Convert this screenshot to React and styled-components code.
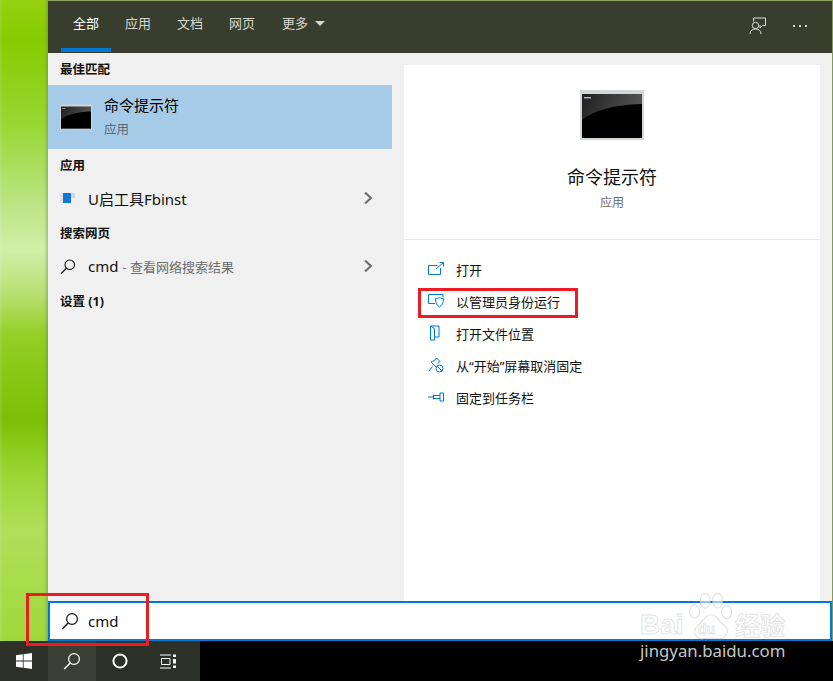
import React from 'react';
import styled, { createGlobalStyle } from 'styled-components';

const Global = createGlobalStyle`
  html, body { margin: 0; padding: 0; background: #000; }
  * { box-sizing: border-box; }
  body { font-family: "Noto Sans", "Noto Sans CJK SC", sans-serif; }
`;

const Page = styled.div`
  position: relative;
  width: 833px;
  height: 681px;
  overflow: hidden;
  display: flex;
  flex-direction: column;
`;
const Desktop = styled.div`
  display: flex;
  height: 641px;
`;
const Wallpaper = styled.div`
  width: 48px;
  background:
    linear-gradient(90deg, rgba(255,255,255,.12) 0, rgba(255,255,255,0) 3px, rgba(255,255,255,0) 44px, rgba(90,110,70,.35) 48px),
    linear-gradient(180deg, #95d010 0, #86cc00 40px, #98d630 120px, #b8e480 200px, #d0f0a8 250px, #b5e070 295px, #94cf25 335px, #7cbf05 420px, #9ad430 470px, #aee05a 530px, #a0d83c 640px);
`;
const Win = styled.div`
  flex: 1;
  display: flex;
  flex-direction: column;
  background: #f0f0f0;
  border-right: 1px solid #7f9c55;
`;
const Header = styled.div`
  height: 53px;
  flex: none;
  display: flex;
  align-items: stretch;
  justify-content: space-between;
  background: #393d2d;
  border-top: 1px solid #8ba35c;
  padding: 0 24px 0 12px;
`;
const Tabs = styled.div`
  display: flex;
`;
const Tab = styled.div`
  width: 50px;
  height: 51px;
  margin: 0 1px;
  display: flex;
  align-items: center;
  justify-content: center;
  gap: 7px;
  padding-bottom: 4px;
  font-size: 13px;
  color: ${p => (p.$active ? '#ffffff' : '#d6d6d0')};
  border-bottom: 4px solid ${p => (p.$active ? '#0078d7' : 'transparent')};
  white-space: nowrap;
  ${p => p.$more && 'width: 66px; justify-content: flex-start; padding-left: 13px;'}
`;
const Caret = styled.span`
  width: 0;
  height: 0;
  border-left: 5px solid transparent;
  border-right: 5px solid transparent;
  border-top: 5px solid #d6d6d0;
  margin-top: 2px;
`;
const HeaderActions = styled.div`
  display: flex;
  align-items: center;
  gap: 25px;
  padding-bottom: 2px;
`;
const Body = styled.div`
  flex: 1;
  display: flex;
  min-height: 0;
`;
const Left = styled.div`
  width: 344px;
  flex: none;
  display: flex;
  flex-direction: column;
`;
const Heading = styled.div`
  height: ${p => p.$h || 34}px;
  flex: none;
  display: flex;
  align-items: center;
  padding: 0 0 ${p => p.$pb ?? 4}px 12px;
  font-size: 12.5px;
  font-weight: 700;
  color: #111;
`;
const BestRow = styled.div`
  height: 64px;
  flex: none;
  display: flex;
  align-items: center;
  gap: 12px;
  padding-left: 12px;
  background: #a6cbe8;
`;
const BestText = styled.div`
  display: flex;
  flex-direction: column;
  gap: 7px;
  padding-bottom: 2px;
`;
const BestTitle = styled.div`
  font-size: 15px;
  line-height: 20px;
  color: #000;
`;
const BestSub = styled.div`
  font-size: 12.5px;
  line-height: 16px;
  color: #56687a;
`;
const Row = styled.div`
  height: 34px;
  flex: none;
  display: flex;
  align-items: center;
  padding: 0 19px 4px 12px;
`;
const IconSlot = styled.span`
  width: 16px;
  height: 16px;
  flex: none;
  display: flex;
  align-items: center;
  justify-content: center;
`;
const RowText = styled.div`
  flex: 1;
  margin-left: 12px;
  font-size: 15px;
  color: #111;
  white-space: nowrap;
`;
const RowHint = styled.span`
  font-size: 13px;
  color: #6d6d6d;
`;
const Right = styled.div`
  flex: 1;
  padding: 12px 12px 0;
  display: flex;
`;
const Card = styled.div`
  flex: 1;
  background: #fff;
  display: flex;
  flex-direction: column;
`;
const Hero = styled.div`
  height: 175px;
  flex: none;
  padding-top: 25px;
  display: flex;
  flex-direction: column;
  align-items: center;
  border-bottom: 1px solid #e9e9e9;
`;
const HeroTitle = styled.div`
  margin-top: 24px;
  font-size: 18px;
  line-height: 26px;
  color: #111;
`;
const HeroSub = styled.div`
  margin-top: 5px;
  font-size: 12px;
  line-height: 16px;
  color: #6d6d6d;
`;
const Actions = styled.div`
  padding-top: 13px;
  display: flex;
  flex-direction: column;
`;
const Action = styled.div`
  height: 32px;
  display: flex;
  align-items: center;
  gap: 12px;
  padding-left: 24px;
  font-size: 13px;
  color: #111;
  white-space: nowrap;
`;
const SearchBox = styled.div`
  height: 40px;
  flex: none;
  display: flex;
  align-items: center;
  gap: 9px;
  padding-left: 11px;
  background: #fff;
  border: 2px solid #0078d7;
  font-size: 15px;
  color: #111;
`;
const Taskbar = styled.div`
  height: 40px;
  flex: none;
  display: flex;
  background: #000;
`;
const TaskGroup = styled.div`
  width: 200px;
  display: flex;
  background: #2c3026;
`;
const TaskCell = styled.div`
  width: 48px;
  display: flex;
  align-items: center;
  justify-content: center;
  background: ${p => (p.$active ? '#3b4034' : 'transparent')};
`;
const RedBox = styled.div`
  position: absolute;
  left: ${p => p.$x}px;
  top: ${p => p.$y}px;
  width: ${p => p.$w}px;
  height: ${p => p.$h}px;
  border: 3px solid #ed1c24;
  pointer-events: none;
`;
const Watermark = styled.div`
  position: absolute;
  left: 638px;
  top: 590px;
  width: 190px;
  height: 85px;
`;
const MarkLogoText = styled.span`
  position: absolute;
  left: ${p => p.$x}px;
  top: ${p => p.$y}px;
  font-family: "Liberation Sans", "Noto Sans CJK SC", sans-serif;
  font-size: ${p => p.$s}px;
  line-height: 1;
  font-weight: 700;
  color: rgba(255,255,255,.6);
  -webkit-text-stroke: 1px rgba(205,205,205,.55);
`;
const MarkUrl = styled.span`
  position: absolute;
  left: 2px;
  top: 51px;
  font-size: 16.8px;
  line-height: 20px;
  color: #c8c8c8;
`;
const PawSvg = styled.svg`
  position: absolute;
  left: 50px;
  top: 2px;
`;

const SearchIcon = ({ color = '#111', size = 18 }) => (
  <svg width={size} height={size} viewBox="0 0 18 18" fill="none" stroke={color} strokeWidth="1.2">
    <circle cx="11" cy="7" r="5.4" />
    <path d="M7.2 11 L1.2 17" strokeWidth="1.4" />
  </svg>
);

const Cmd = ({ w, h }) => {
  const id = `cg${w}`;
  return (
    <svg width={w} height={h} viewBox="0 0 64 50">
      <defs>
        <linearGradient id={id} x1="0" y1="0" x2="1" y2="0.3">
          <stop offset="0" stopColor="#202020" />
          <stop offset="1" stopColor="#555555" />
        </linearGradient>
      </defs>
      <rect x="0" y="0" width="64" height="50" fill="#d0d6dc" />
      <rect x="2" y="4" width="60" height="44" fill={`url(#${id})`} />
      <path d="M2 30 C14 20 34 15 62 14 L62 48 L2 48 Z" fill="#000" />
      <rect x="4" y="7" width="7" height="1.4" fill="#bbb" />
    </svg>
  );
};

const UIcon = () => (
  <svg width="16" height="14" viewBox="0 0 16 14">
    <rect x="0" y="2" width="3" height="10" fill="#dfe3e8" />
    <rect x="3" y="2" width="8" height="10" fill="#0f78d8" />
    <rect x="11" y="2" width="4" height="5" fill="#d5d5d5" />
  </svg>
);

const Chevron = () => (
  <svg width="10" height="14" viewBox="0 0 10 14" fill="none" stroke="#6b6b6b" strokeWidth="2">
    <path d="M2 1.5 L8 7 L2 12.5" />
  </svg>
);

const IconOpen = () => (
  <svg width="16" height="14" viewBox="0 0 16 14" fill="none" stroke="#0078d7" strokeWidth="1">
    <path d="M9.5 3.5 H0.5 V12.5 H12.5 V6" />
    <path d="M8 7 L15 1 M11.5 0.5 H15.5 V4.5" />
  </svg>
);
const IconAdmin = () => (
  <svg width="16" height="14" viewBox="0 0 16 14" fill="none" stroke="#0078d7" strokeWidth="1">
    <path d="M7 9.5 H0.5 V0.5 H15 V3" />
    <path d="M7.5 4.5 C9.5 4.5 10.5 4 11.5 3.5 C12.5 4 13.5 4.5 15.5 4.5 C15.5 9 14 11.5 11.5 13 C9 11.5 7.5 9 7.5 4.5 Z" fill="#fff" />
  </svg>
);
const IconFolder = () => (
  <svg width="16" height="16" viewBox="0 0 16 16" fill="none" stroke="#0078d7" strokeWidth="1">
    <path d="M2.5 1 H11 V12 H6.5 V15 H2.5 Z" />
    <path d="M2.5 1 L6.5 3.5 V12" />
  </svg>
);
const IconUnpin = () => (
  <svg width="16" height="16" viewBox="0 0 16 16" fill="none" stroke="#0078d7" strokeWidth="1">
    <path d="M8.5 1 L12 4.5 L9.5 6.5 M6.5 3.5 L8.5 1 M6.5 3.5 L3 5 L5 7 M3 5 L9 11" />
    <path d="M4.5 9.5 L1 14" />
    <circle cx="11.5" cy="11.5" r="3.5" fill="#fff" />
    <path d="M9 9 L14 14" />
  </svg>
);
const IconPin = () => (
  <svg width="16" height="10" viewBox="0 0 16 10" fill="none" stroke="#0078d7" strokeWidth="1">
    <path d="M0 5 H5.5 M5.5 2.5 V7.5 M5.5 3.5 H12 M5.5 6.5 H12 M12 1 V9 L15.5 9 V1 Z" />
  </svg>
);

const FeedbackIcon = () => (
  <svg width="18" height="18" viewBox="0 0 18 18" fill="none" stroke="#e0e0da" strokeWidth="1">
    <path d="M4.5 4.5 V1 H16.5 V8.5 H13.5 L11 11 V8" />
    <circle cx="6.5" cy="8.5" r="3.2" />
    <path d="M1 17 C1 13.5 3.5 12 6.5 12 C9.5 12 12 13.5 12 17" />
  </svg>
);
const MoreIcon = () => (
  <svg width="16" height="4" viewBox="0 0 16 4" fill="#d8d8d2">
    <rect x="1" y="1" width="2" height="2" />
    <rect x="7" y="1" width="2" height="2" />
    <rect x="13" y="1" width="2" height="2" />
  </svg>
);
const WinLogo = () => (
  <svg width="16" height="16" viewBox="0 0 16 16" fill="#fff">
    <path d="M0 2.3 L6.8 1.3 V7.5 H0 Z M7.6 1.2 L16 0 V7.5 H7.6 Z M0 8.4 H6.8 V14.7 L0 13.7 Z M7.6 8.4 H16 V16 L7.6 14.8 Z" />
  </svg>
);
const Cortana = () => (
  <svg width="16" height="16" viewBox="0 0 16 16" fill="none" stroke="#fff" strokeWidth="2">
    <circle cx="8" cy="8" r="6.6" />
  </svg>
);
const TaskView = () => (
  <svg width="17" height="15" viewBox="0 0 17 15" fill="none" stroke="#fff" strokeWidth="1">
    <path d="M0 1 H11 M0 14 H11 M1.5 4.5 H10 V10.5 H1.5 Z" />
    <rect x="13" y="0.5" width="3" height="2.5" fill="#fff" stroke="none" />
    <rect x="13" y="5" width="3" height="4.5" fill="#fff" stroke="none" />
    <rect x="13" y="11.5" width="3" height="2.5" fill="#fff" stroke="none" />
  </svg>
);
const Paw = () => (
  <PawSvg width="46" height="52" viewBox="0 0 56 62" fill="rgba(255,255,255,.55)" stroke="rgba(205,205,205,.6)" strokeWidth="1.4">
    <ellipse cx="8" cy="23" rx="6" ry="8" />
    <ellipse cx="21" cy="10" rx="6" ry="9" />
    <ellipse cx="36" cy="10" rx="6" ry="9" />
    <ellipse cx="47" cy="24" rx="6" ry="8" />
    <path d="M28 27 C36 27 38 36 44 40 C52 46 46 58 36 56 C30 55 26 55 20 56 C10 58 4 48 12 40 C18 36 20 27 28 27 Z" />
  </PawSvg>
);

const actions = [
  ['打开', IconOpen],
  ['以管理员身份运行', IconAdmin],
  ['打开文件位置', IconFolder],
  ['从“开始”屏幕取消固定', IconUnpin],
  ['固定到任务栏', IconPin],
];

export default function App() {
  return (
    <Page>
      <Global />
      <Desktop>
        <Wallpaper />
        <Win>
          <Header>
            <Tabs>
              <Tab $active>全部</Tab>
              <Tab>应用</Tab>
              <Tab>文档</Tab>
              <Tab>网页</Tab>
              <Tab $more>更多<Caret /></Tab>
            </Tabs>
            <HeaderActions>
              <FeedbackIcon />
              <MoreIcon />
            </HeaderActions>
          </Header>
          <Body>
            <Left>
              <Heading $h={32} $pb={2}>最佳匹配</Heading>
              <BestRow>
                <Cmd w={32} h={26} />
                <BestText>
                  <BestTitle>命令提示符</BestTitle>
                  <BestSub>应用</BestSub>
                </BestText>
              </BestRow>
              <Heading>应用</Heading>
              <Row>
                <IconSlot><UIcon /></IconSlot>
                <RowText>U启工具Fbinst</RowText>
                <Chevron />
              </Row>
              <Heading>搜索网页</Heading>
              <Row>
                <IconSlot><SearchIcon size={17} /></IconSlot>
                <RowText>cmd <RowHint>- 查看网络搜索结果</RowHint></RowText>
                <Chevron />
              </Row>
              <Heading>设置 (1)</Heading>
            </Left>
            <Right>
              <Card>
                <Hero>
                  <Cmd w={64} h={50} />
                  <HeroTitle>命令提示符</HeroTitle>
                  <HeroSub>应用</HeroSub>
                </Hero>
                <Actions>
                  {actions.map(([label, Icon]) => (
                    <Action key={label}>
                      <IconSlot><Icon /></IconSlot>
                      {label}
                    </Action>
                  ))}
                </Actions>
              </Card>
            </Right>
          </Body>
          <SearchBox>
            <SearchIcon size={18} />
            cmd
          </SearchBox>
        </Win>
      </Desktop>
      <Taskbar>
        <TaskGroup>
          <TaskCell><WinLogo /></TaskCell>
          <TaskCell $active><SearchIcon color="#fff" size={18} /></TaskCell>
          <TaskCell><Cortana /></TaskCell>
          <TaskCell><TaskView /></TaskCell>
        </TaskGroup>
      </Taskbar>
      <RedBox $x={418} $y={288} $w={160} $h={30} />
      <RedBox $x={26} $y={593} $w={123} $h={53} />
      <Watermark>
        <Paw />
        <MarkLogoText $x={2} $y={21} $s={28}>Bai</MarkLogoText>
        <MarkLogoText $x={60} $y={32} $s={14}>du</MarkLogoText>
        <MarkLogoText $x={97} $y={24} $s={25}>经验</MarkLogoText>
        <MarkUrl>jingyan.baidu.com</MarkUrl>
      </Watermark>
    </Page>
  );
}
